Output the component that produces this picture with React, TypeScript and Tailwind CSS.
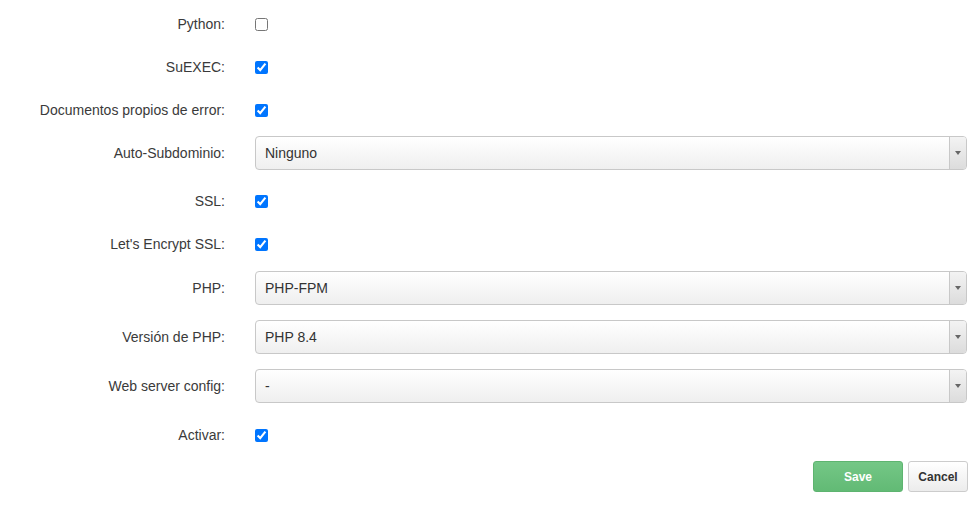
import React from "react";

function Check({ checked }: { checked: boolean }) {
  return (
    <input
      type="checkbox"
      defaultChecked={checked}
      className="m-0 ml-[30px] h-[13px] w-[13px] accent-[#0075ff]"
    />
  );
}

function Select({ value }: { value: string }) {
  return (
    <div className="ml-[30px] flex h-[34px] w-[712px] overflow-hidden rounded-[4px] border border-[#c8c8c8] bg-linear-to-b from-white to-[#efefef]">
      <div className="flex flex-1 items-center pl-[9px] text-[14px] text-[#333]">{value}</div>
      <div className="flex w-[17px] items-center justify-center border-l border-[#c8c8c8] bg-linear-to-b from-[#f3f3f3] to-[#dcdcdc]">
        <span className="h-0 w-0 border-x-[3px] border-t-[4px] border-x-transparent border-t-[#666]" />
      </div>
    </div>
  );
}

function Row({ label, mt, h, children }: { label: string; mt: string; h: string; children: React.ReactNode }) {
  return (
    <div className={`flex items-center ${mt} ${h}`}>
      <div className="w-[225px] text-right text-[14px] text-[#3a3a3a]">{label}</div>
      {children}
    </div>
  );
}

export default function App() {
  return (
    <div className="h-[511px] w-[978px] overflow-hidden bg-white font-['Liberation_Sans',Arial,sans-serif]">
      <div className="flex flex-col">
        <Row label="Python:" mt="mt-[10px]" h="h-[28px]">
          <Check checked={false} />
        </Row>
        <Row label="SuEXEC:" mt="mt-[15px]" h="h-[28px]">
          <Check checked />
        </Row>
        <Row label="Documentos propios de error:" mt="mt-[15px]" h="h-[28px]">
          <Check checked />
        </Row>
        <Row label="Auto-Subdominio:" mt="mt-[12px]" h="h-[34px]">
          <Select value="Ninguno" />
        </Row>
        <Row label="SSL:" mt="mt-[17px]" h="h-[28px]">
          <Check checked />
        </Row>
        <Row label="Let's Encrypt SSL:" mt="mt-[15px]" h="h-[28px]">
          <Check checked />
        </Row>
        <Row label="PHP:" mt="mt-[13px]" h="h-[34px]">
          <Select value="PHP-FPM" />
        </Row>
        <Row label="Versión de PHP:" mt="mt-[15px]" h="h-[34px]">
          <Select value="PHP 8.4" />
        </Row>
        <Row label="Web server config:" mt="mt-[15px]" h="h-[34px]">
          <Select value="-" />
        </Row>
        <Row label="Activar:" mt="mt-[18px]" h="h-[28px]">
          <Check checked />
        </Row>
        <div className="mt-[12px] flex justify-end gap-[5px] pr-[10px]">
          <button className="h-[31px] w-[90px] rounded-[3px] border border-[#5eb470] bg-linear-to-b from-[#74c786] to-[#62ba75] text-[12px] font-bold text-white">
            Save
          </button>
          <button className="h-[31px] w-[60px] rounded-[3px] border border-[#cccccc] bg-linear-to-b from-white to-[#ececec] text-[12px] font-bold text-[#333]">
            Cancel
          </button>
        </div>
      </div>
    </div>
  );
}
